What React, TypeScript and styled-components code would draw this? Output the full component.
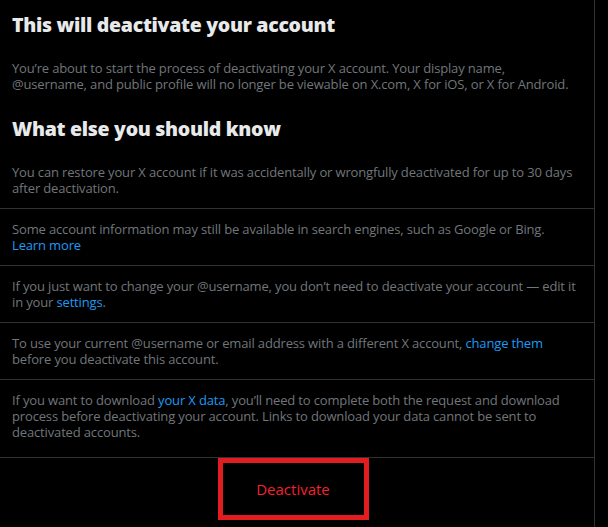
import React from 'react';
import styled, { createGlobalStyle } from 'styled-components';

const GlobalStyle = createGlobalStyle`
  html, body {
    margin: 0;
    padding: 0;
    background: #000;
  }
  body {
    font-family: 'Open Sans', 'Noto Sans', sans-serif;
  }
`;

const Panel = styled.div`
  width: 594px;
  min-height: 100vh;
  border-right: 1px solid #2f3336;
  background: #000;
  display: flex;
  flex-direction: column;
`;

const Heading = styled.h2`
  margin: 0;
  padding: 13px 12px 11px;
  font-size: 19.5px;
  letter-spacing: -0.3px;
  line-height: 24px;
  font-weight: 800;
  color: #e7e9ea;
`;

const Text = styled.p`
  margin: 0;
  padding: 12px;
  font-size: 13px;
  letter-spacing: -0.15px;
  line-height: 16px;
  color: #71767b;
`;

const Item = styled.div<{ divided: boolean; extra?: boolean }>`
  padding: ${(props) => (props.extra ? '12px 12px 17px' : '12px')};
  border-top: ${(props) => (props.divided ? '1px solid #2f3336' : 'none')};
  font-size: 13px;
  letter-spacing: -0.15px;
  line-height: 16px;
  color: #71767b;
`;

const Link = styled.a<{ block?: boolean }>`
  display: ${(props) => (props.block ? 'block' : 'inline')};
  width: fit-content;
  color: #1d9bf0;
  text-decoration: none;
`;

const Footer = styled.div`
  border-top: 1px solid #2f3336;
  display: flex;
  justify-content: center;
  padding-right: 8px;
`;

const DeactivateButton = styled.button`
  width: 151px;
  height: 62px;
  box-sizing: border-box;
  border: 5px solid #e21c1f;
  background: #000;
  color: #f4212e;
  font-family: inherit;
  font-size: 15px;
  cursor: pointer;
`;

const items = [
  {
    key: 'restore',
    content: (
      <>
        You can restore your X account if it was accidentally or wrongfully deactivated for up to 30
        days after deactivation.
      </>
    ),
  },
  {
    key: 'search',
    content: (
      <>
        Some account information may still be available in search engines, such as Google or Bing.
        <Link href="#" block>
          Learn more
        </Link>
      </>
    ),
  },
  {
    key: 'username',
    content: (
      <>
        If you just want to change your @username, you don’t need to deactivate your account — edit
        it in your <Link href="#">settings</Link>.
      </>
    ),
  },
  {
    key: 'email',
    content: (
      <>
        To use your current @username or email address with a different X account,{' '}
        <Link href="#">change them</Link> before you deactivate this account.
      </>
    ),
  },
  {
    key: 'data',
    content: (
      <>
        If you want to download <Link href="#">your X data</Link>, you’ll need to complete both the
        request and download process before deactivating your account. Links to download your data
        cannot be sent to deactivated accounts.
      </>
    ),
  },
];

function App() {
  return (
    <>
      <GlobalStyle />
      <Panel>
        <Heading>This will deactivate your account</Heading>
        <Text>
          You’re about to start the process of deactivating your X account. Your display name,
          @username, and public profile will no longer be viewable on X.com, X for iOS, or X for
          Android.
        </Text>
        <Heading>What else you should know</Heading>
        {items.map((item, i) => (
          <Item key={item.key} divided={i > 0} extra={i === items.length - 1}>
            {item.content}
          </Item>
        ))}
        <Footer>
          <DeactivateButton>Deactivate</DeactivateButton>
        </Footer>
      </Panel>
    </>
  );
}

export default App;
